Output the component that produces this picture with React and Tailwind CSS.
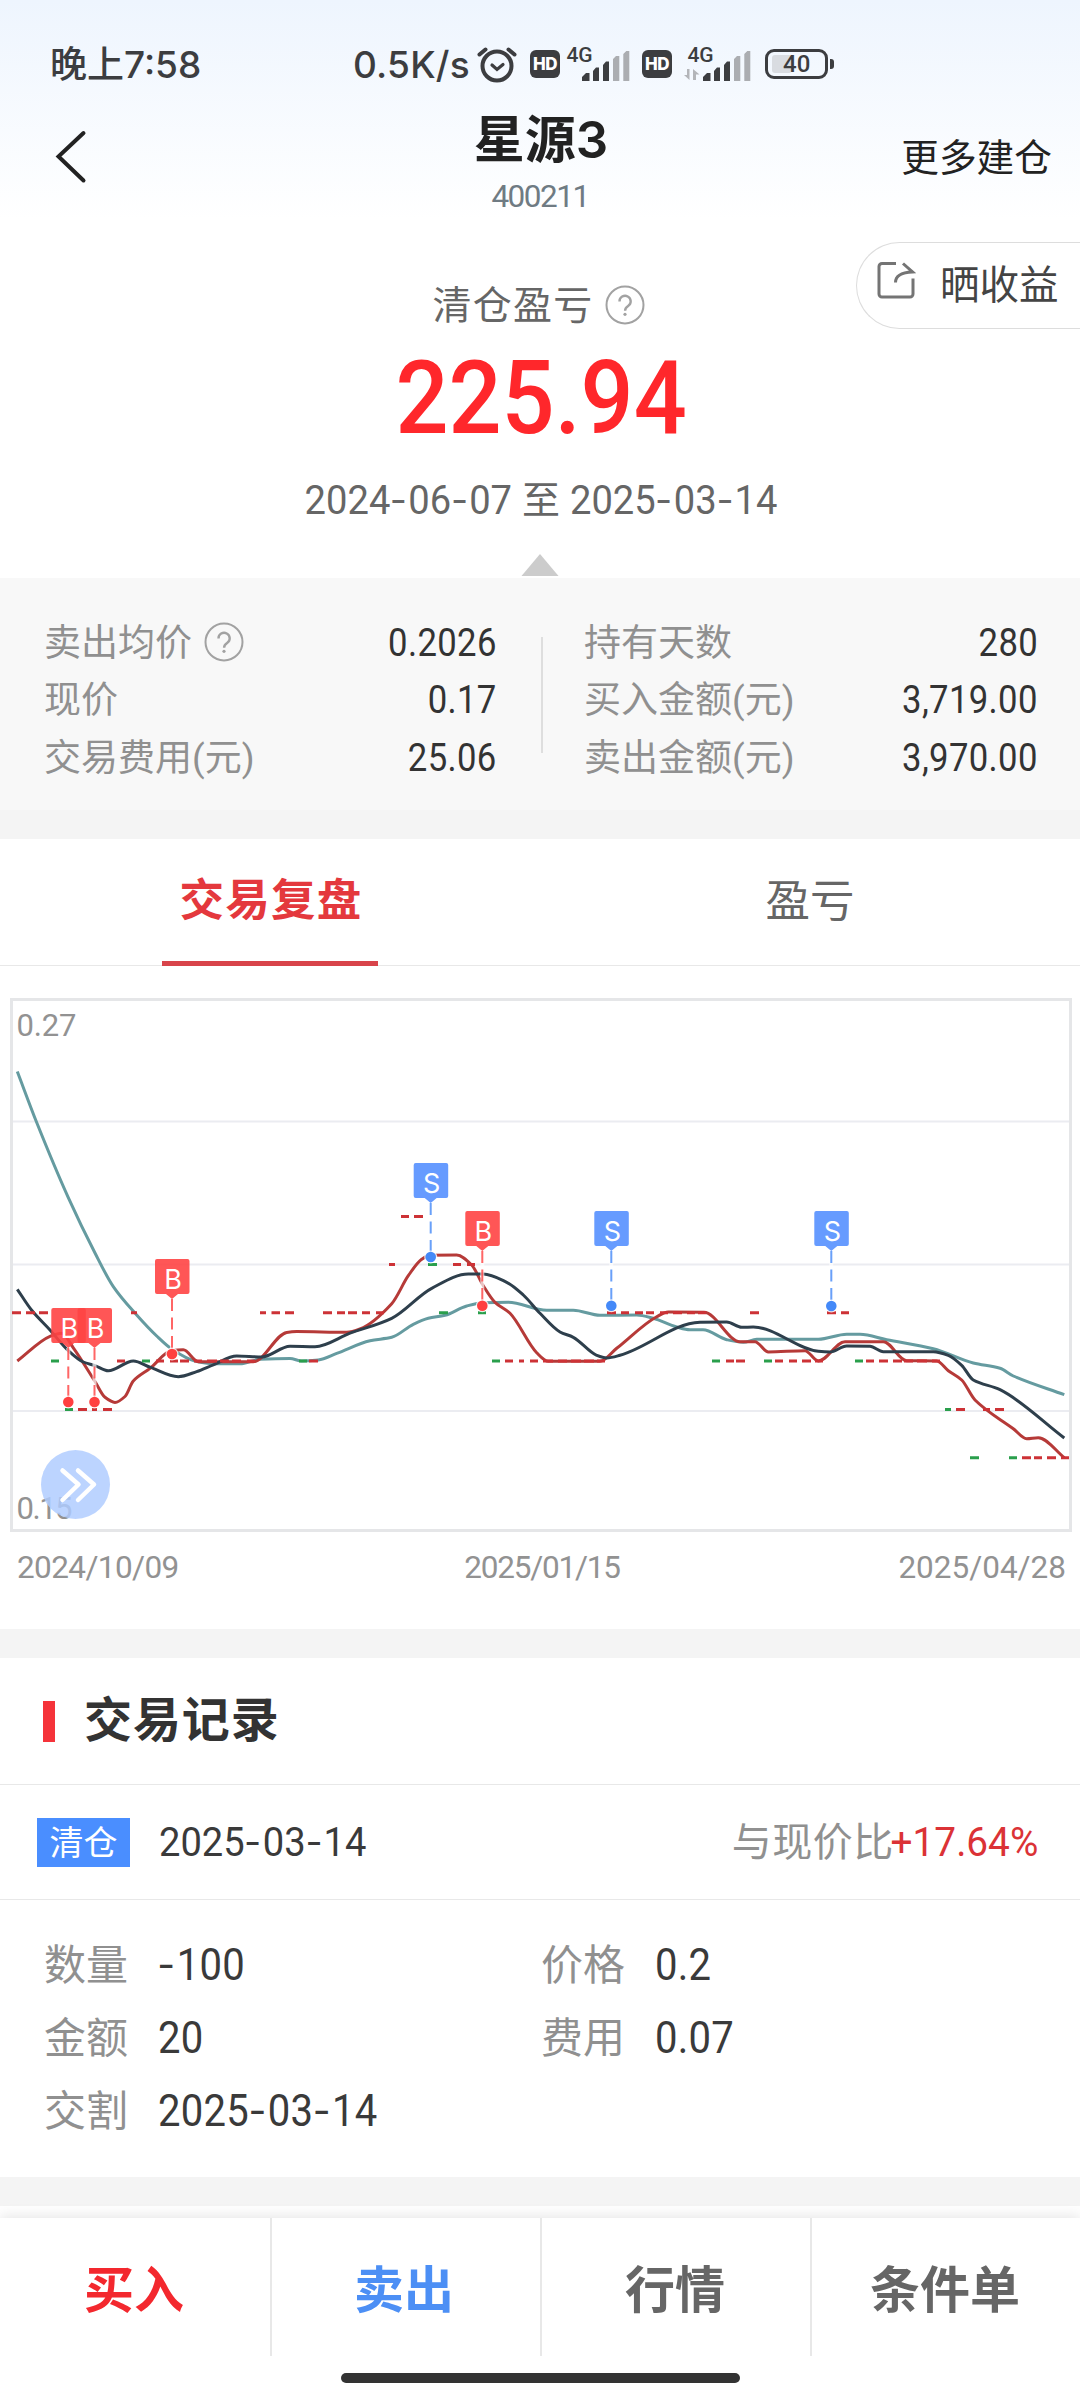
import React from "react";

const MA5 = [[17.3,1361],[50,1336.4],[61.7,1333.2],[73.3,1347.8],[95,1381.5],[105,1397.3],[115,1402.4],[125,1396.5],[133.3,1381],[150,1368.4],[171.7,1350.6],[183.3,1349.8],[198.3,1361.7],[253.3,1361.7],[286.7,1332.4],[296.7,1331.6],[346.7,1332.3],[360,1329],[391.7,1303.7],[408.3,1275.7],[421.7,1259.3],[430,1255.3],[456.7,1255],[471.7,1265],[483.3,1285.7],[495,1302.3],[510,1313.3],[536.7,1352.7],[548.3,1361.3],[600,1361.3],[616.7,1348.3],[656.7,1316.7],[668.3,1312],[704,1312.3],[740,1341.7],[755,1341.7],[768.3,1352],[805,1350.7],[818.3,1361],[845,1341.7],[883.3,1341.7],[906.7,1360.7],[936.7,1361],[948.3,1370.7],[961.7,1380],[975,1400],[1013.3,1428.7],[1026.7,1438.7],[1038.3,1437.7],[1064.3,1457.7]];
const MA10 = [[17.3,1289.3],[31.7,1310.3],[50,1330],[68.3,1350.6],[83.3,1362],[95,1365.6],[108.3,1370.8],[133.3,1361],[150,1367.2],[178.3,1376.7],[196.7,1371.6],[213.3,1364.8],[236.7,1356],[261.7,1357],[290,1346.3],[315,1346.7],[350,1333.2],[391.7,1318.3],[431.7,1288.3],[468.3,1274],[483.3,1274],[506.7,1282.3],[523.3,1295],[540,1313.3],[560,1332],[573.3,1337.3],[596.7,1355.3],[606.7,1358],[620,1355.3],[700,1322.3],[726.7,1322],[741.7,1327.3],[753.3,1327],[818.3,1351.3],[830,1352],[846.7,1346],[870,1346.3],[883.3,1351.7],[933.3,1351.7],[948.3,1355.3],[961.7,1365.3],[973.3,1380],[1000,1389.7],[1064.3,1438]];
const MA20 = [[17.3,1071.5],[36.7,1122.5],[68.3,1197.6],[95,1253],[113.3,1286.6],[136.7,1315],[156.7,1336],[171.7,1349],[195,1361],[213,1363.7],[240,1363.7],[260,1359.3],[290,1358.5],[301.7,1361],[318.3,1360],[336.7,1353.4],[370,1340.7],[391.7,1337.3],[413.3,1324.3],[428.3,1318.3],[445,1315.3],[466.7,1306],[483.3,1302.7],[508.3,1302.3],[546.7,1310.3],[573.3,1310.3],[600,1315.3],[636.7,1315],[653.3,1318.3],[676.7,1327],[690,1329.7],[703,1329.7],[726.7,1339.7],[743.3,1342.3],[756.7,1339.3],[818.3,1339.3],[846.7,1334.3],[860,1334.3],[886.7,1339.7],[933.3,1348.7],[973.3,1363],[1000,1368.3],[1013.3,1376],[1064.3,1394.7]];

// Price ticks: [level, up segments, down segments]
const TICKS = [
  [1216.5, [[401,409],[414,423]], []],
  [1264.5, [[389,395],[453,461],[467,475]], [[428,437]]],
  [1312.7, [[12,21],[26,35],[39,48],[131,137],[260,266],[271.5,280],[285,294],[323,332],[337,345],[348,357],[362,370],[376,384],[607,616],[621,629],[635,643],[646,654],[660,668],[673,682],[687,695],[698,706],[750,759],[827,836],[841,849]], [[439,448],[478,486]]],
  [1361, [[117,125],[156,164],[170,178],[180,189],[194,202],[207,217],[220,229],[232,241],[247,255],[309,318],[505,513],[519,524],[530,538],[543,553],[558,567],[571,581],[584,594],[597,605],[726,734],[736,745],[775,783],[789,797],[802,811],[815,823],[866,874],[879,888],[893,902],[904,913],[917,927],[932,940]], [[51,59],[142,150],[299,307],[492,500],[712,720],[764,772],[855,863]]],
  [1409.5, [[78,87],[92,97],[103,112],[956,965],[983,990],[995,1004]], [[65,73],[945,951]]],
  [1457.7, [[1022,1031],[1034,1042],[1047,1056],[1061,1069]], [[970,979],[1009,1017]]],
];

const MARKERS = [
  ["B", 94.5, 1308, 1402],
  ["B", 68.3, 1308, 1402],
  ["B", 172, 1259, 1354],
  ["S", 430.7, 1163, 1257],
  ["B", 482.3, 1211, 1305.7],
  ["S", 611.3, 1211, 1305.7],
  ["S", 831.3, 1211, 1306],
];

// Monotone cubic path through the points
function smooth(p) {
  const n = p.length;
  const s = [];
  for (let i = 0; i < n - 1; i++) s.push((p[i + 1][1] - p[i][1]) / (p[i + 1][0] - p[i][0]));
  const m = p.map((_, i) => {
    if (i === 0) return s[0];
    if (i === n - 1) return s[n - 2];
    if (s[i - 1] * s[i] <= 0) return 0;
    return (2 * s[i - 1] * s[i]) / (s[i - 1] + s[i]);
  });
  let d = `M${p[0][0]} ${p[0][1]}`;
  for (let i = 0; i < n - 1; i++) {
    const h = (p[i + 1][0] - p[i][0]) / 3;
    d += `C${p[i][0] + h} ${p[i][1] + m[i] * h} ${p[i + 1][0] - h} ${p[i + 1][1] - m[i + 1] * h} ${p[i + 1][0]} ${p[i + 1][1]}`;
  }
  return d;
}

function Marker({ m: [kind, x, top, dot] }) {
  const box = kind === "B" ? "#ff4444" : "#5590ff";
  const fill = kind === "B" ? "#ff4040" : "#4489f8";
  return (
    <g>
      <path d={`M${x} ${top + 40}V${dot}`} stroke="#fff" strokeWidth="4" opacity="0.7" />
      <path d={`M${x} ${top + 40}V${dot}`} stroke={fill} strokeWidth="2" strokeDasharray="12 6.5" opacity="0.8" />
      <circle cx={x} cy={dot} r="6.5" fill="#fff" opacity="0.8" />
      <circle cx={x} cy={dot} r="5.3" fill={fill} />
      <path
        d={`M${x - 15} ${top}h30.500a2 2 0 0 1 2 2v31a2 2 0 0 1-2 2h-9.500l-6 5-6-5h-9a2 2 0 0 1-2-2v-31a2 2 0 0 1 2-2z`}
        fill={box}
        opacity="0.9"
      />
      <text x={x + 1} y={top + 30} textAnchor="middle" fontSize="27" fill="#fff" className="font-[Inter,sans-serif]">{kind}</text>
    </g>
  );
}

function Chart() {
  return (
    <svg width="1062" height="534" viewBox="10 998 1062 534" className="block">
      <g stroke="#ebecf1" strokeWidth="2">
        <path d="M12 1121.500H1070M12 1264.500H1070M12 1411H1070" />
      </g>
      <rect x="11.500" y="999.500" width="1059" height="531" fill="none" stroke="#e5e6e8" strokeWidth="3" />
      <g fontSize="31" fill="#929292" className="font-[Roboto,sans-serif]">
        <text x="16.500" y="1036" textLength="60">0.27</text>
        <text x="16.500" y="1518.500" textLength="56">0.15</text>
      </g>
      <path d={smooth(MA20)} fill="none" stroke="#659ba0" strokeWidth="3" />
      <path d={smooth(MA5)} fill="none" stroke="#b63a38" strokeWidth="3" />
      <path d={smooth(MA10)} fill="none" stroke="#2e3f4c" strokeWidth="3" />
      {TICKS.map(([y, up, down]) => (
        <g key={y} strokeWidth="3">
          <path d={up.map(([a, b]) => `M${a} ${y}H${b}`).join("")} stroke="#cd3236" />
          <path d={down.map(([a, b]) => `M${a} ${y}H${b}`).join("")} stroke="#2a9f4c" />
        </g>
      ))}
      {MARKERS.map((m) => <Marker key={m[1]} m={m} />)}
      <circle cx="75.500" cy="1484.500" r="34.500" fill="#aecbff" opacity="0.83" />
      <path d="M62.500 1470.500l16 14-16 15.500M78 1470.500l16 14-16 15.500" fill="none" stroke="#fff" strokeWidth="4.500" strokeLinecap="round" strokeLinejoin="round" />
    </svg>
  );
}

function Help() {
  return (
    <svg width="40" height="40" viewBox="0 0 40 40" fill="none" stroke="#a2a2a2" className="block">
      <circle cx="20" cy="20" r="18.500" strokeWidth="2" />
      <path d="M14.500 16.500a5.600 5.600 0 1 1 8.600 4.600c-2 1.300-3 2.300-3 4.700" strokeWidth="2.400" />
      <circle cx="20" cy="29.300" r="1.600" fill="#a2a2a2" stroke="none" />
    </svg>
  );
}

function Hd() {
  return (
    <div className="flex h-[28px] w-[30px] items-center justify-center rounded-[6px] bg-[#3c3d40] font-[Inter,sans-serif] text-[17px] font-extrabold leading-none tracking-[-0.500px] text-white">HD</div>
  );
}

function Signal({ data }) {
  return (
    <svg width="68" height="52" viewBox="0 -8 68 52" className="block overflow-visible">
      <text x="3.500" y="15.500" fontSize="21" textLength="26" fill="#3c3d40" className="font-[Roboto,sans-serif]">4G</text>
      <path d="M19 35v-4l4-4h3.500v8zM30 35v-10l3-3.500h3v13.500zM40 35v-16l3-3.500h3v19.500z" fill="#3c3d40" />
      <path d="M50 13l3-3h3.300v25h-6.300zM60.300 8l3-3h3v30h-6z" fill="#abadb1" />
      {data && <path d="M5.500 23v11l-5.500-5h3v-6zM9 34v-11l6.500 5.500h-3.500v5.500z" fill="#b3b5b9" />}
    </svg>
  );
}

// Digits are condensed; hyphens get extra room on both sides
function Digits({ children }) {
  return children.split("-").map((part, i) => (
    <React.Fragment key={i}>
      {i > 0 && <span className="mr-[5px] ml-[3px] inline-block scale-x-[1.3]">-</span>}
      {part}
    </React.Fragment>
  ));
}

function StatusBar() {
  return (
    <div className="flex h-[128px] items-center text-[37px] font-medium leading-none text-[#3c3d40]">
      <span className="ml-[50px] w-[303px] font-[Inter,'Noto_Sans_CJK_SC',sans-serif] whitespace-nowrap">晚上7:58</span>
      <span className="w-[123px] font-[Inter,sans-serif] tracking-[0.2px] whitespace-nowrap">0.5K/s</span>
      <svg width="42" height="38" viewBox="0 0 42 38" fill="none" stroke="#3c3d40" strokeWidth="4" strokeLinecap="round" className="block">
        <circle cx="21" cy="21" r="14.500" />
        <path d="M3.500 9.500l6-5M38.500 9.500l-6-5" />
        <path d="M16 20l5 4.500 6-5" strokeWidth="3.200" />
      </svg>
      <div className="ml-[12px]"><Hd /></div>
      <div className="ml-[3px]"><Signal /></div>
      <div className="ml-[11px]"><Hd /></div>
      <div className="ml-[12px]"><Signal data /></div>
      <div className="ml-[13px] flex items-center gap-[2px]">
        <div className="flex h-[30px] w-[63px] items-center rounded-[9px] border-[3px] border-[#3c3d40] pl-[4px]">
          <div className="h-[18px] w-[20px] rounded-[3px] bg-[#d9dce1]" />
          <span className="-ml-[9px] font-[Roboto,sans-serif] text-[24px] leading-none">40</span>
        </div>
        <div className="h-[10px] w-[4px] rounded-r-[3px] bg-[#3c3d40]" />
      </div>
    </div>
  );
}

function Stat({ label, value, help }) {
  return (
    <div className="flex h-[57.500px] items-center justify-between text-[37px] leading-none">
      <div className="flex items-center gap-[12px] text-[#909090]">
        <span className="pt-[3px]">{label}</span>
        {help && <Help />}
      </div>
      <span className="origin-right scale-x-[0.9] pt-[2px] text-[38.500px] tracking-[0.4px] text-[#333]">{value}</span>
    </div>
  );
}

function Field({ label, value }) {
  return (
    <div className="flex h-[73px] items-center text-[42px] leading-none">
      <span className="w-[114px] pt-[3px] text-[#909090]">{label}</span>
      <span className="origin-left scale-x-[0.92] pt-[2px] text-[43.500px] tracking-[0.3px] text-[#3a3a3a]"><Digits>{value}</Digits></span>
    </div>
  );
}

const ACTIONS = [
  ["买入", "text-[#f3282e] pr-[2px]"],
  ["卖出", "text-[#4c8ff5] border-l-2 pr-[4px]"],
  ["行情", "text-[#666] border-l-2 pr-[2px]"],
  ["条件单", "text-[#666] border-l-2 pr-[2px]"],
];

export default function App() {
  return (
    <div className="flex h-[2400px] w-[1080px] flex-col overflow-hidden bg-white font-[Roboto,'Noto_Sans_CJK_SC',sans-serif]">
      <header className="h-[220px] shrink-0 bg-linear-to-b from-[#eef5fe] to-white">
        <div className="h-[96px]"><StatusBar /></div>
        <div className="flex h-[124px] justify-between">
          <svg width="300" height="100" viewBox="0 0 300 100" className="block" fill="none" stroke="#222" strokeWidth="4" strokeLinecap="round">
            <path d="M83.500 37L58.500 60.500L83.500 84.500" />
          </svg>
          <div className="flex w-[300px] flex-col items-center pt-[18px] pl-[2px] leading-none">
            <h1 className="font-[Inter,'Noto_Sans_CJK_SC',sans-serif] text-[51px] font-semibold leading-none text-[#222]">星源3</h1>
            <p className="mt-[16px] pr-[2px] text-[31.500px] leading-none tracking-[-1.500px] text-[#6f7b83]">400211</p>
          </div>
          <span className="w-[300px] pt-[44px] pr-[28px] text-right text-[37.700px] leading-none text-[#222]">更多建仓</span>
        </div>
      </header>

      <section className="flex h-[358px] shrink-0 flex-col">
        <div className="flex h-[108px] justify-end pt-[22px]">
          <div className="flex h-[87px] w-[224px] shrink-0 items-center rounded-l-full border border-r-0 border-[#ddd] pl-[19px] text-[39.500px] leading-none text-[#444]">
            <svg width="40" height="40" viewBox="0 0 40 40" fill="none" stroke="#747474" strokeWidth="3" className="mr-[24px] block -translate-y-[6px]">
              <path d="M20 3.500H6a3 3 0 0 0-3 3V34a3 3 0 0 0 3 3h28a3 3 0 0 0 3-3V18.500" />
              <path d="M19.500 22.500c0-7 6-10 17-10.500L27 3.500" />
            </svg>
            <span className="pt-[1px] whitespace-nowrap">晒收益</span>
          </div>
        </div>
        <div className="-mt-[48px] flex h-[50px] items-center justify-center gap-[11px] pr-[3px] text-[39px] leading-none tracking-[1.300px] text-[#666]">
          <span className="pt-[2px]">清仓盈亏</span>
          <Help />
        </div>
        <div className="mt-[16px] flex h-[103px] items-center justify-center pl-[2px]">
          <span className="scale-x-[0.915] text-[102px] font-medium leading-none text-[#ff272b]">225.94</span>
        </div>
        <div className="mt-[31px] flex h-[40px] items-center justify-center gap-[10px] pl-[2px] text-[#666]">
          <span className="origin-right scale-x-[0.93] text-[41px] leading-none"><Digits>2024-06-07</Digits></span>
          <span className="text-[38px] leading-none">至</span>
          <span className="origin-left scale-x-[0.93] text-[41px] leading-none"><Digits>2025-03-14</Digits></span>
        </div>
        <svg width="38" height="22" viewBox="0 0 38 22" className="mx-auto mt-[34px] block"><path d="M19 0L37.500 22H.5z" fill="#ccc" /></svg>
      </section>

      <section className="flex h-[232px] shrink-0 bg-[#f8f8f8] pt-[35px]">
        <div className="w-[541px] pr-[44px] pl-[44px]">
          <Stat label="卖出均价" value="0.2026" help />
          <Stat label="现价" value="0.17" />
          <Stat label="交易费用(元)" value="25.06" />
        </div>
        <div className="mt-[24px] h-[116px] w-[2px] bg-[#dedede]" />
        <div className="w-[537px] pr-[42px] pl-[41px]">
          <Stat label="持有天数" value="280" />
          <Stat label="买入金额(元)" value="3,719.00" />
          <Stat label="卖出金额(元)" value="3,970.00" />
        </div>
      </section>
      <div className="h-[29px] shrink-0 bg-[#f4f4f4]" />

      <nav className="grid h-[127px] shrink-0 grid-cols-2 border-b border-[#e8e8e8] text-[44.500px] leading-none">
        <div className="flex justify-center">
          <div className="flex h-[127px] w-[216px] items-center justify-center border-b-[5px] border-[#d8444a] pt-[3px] pl-[2px] font-bold tracking-[1.200px] whitespace-nowrap text-[#e4383d]">交易复盘</div>
        </div>
        <div className="flex items-center justify-center text-[#666]">盈亏</div>
      </nav>

      <section className="h-[663px] shrink-0 pt-[32px] pl-[10px]">
        <Chart />
        <div className="mt-[20px] flex w-[1056px] items-center justify-between pl-[7px] text-[31.500px] leading-none text-[#929292]">
          <span className="tracking-[-0.600px]">2024/10/09</span>
          <span className="pl-[7px] tracking-[-1.200px]">2025/01/15</span>
          <span>2025/04/28</span>
        </div>
      </section>
      <div className="h-[29px] shrink-0 bg-[#f4f4f4]" />

      <section className="h-[519px] shrink-0">
        <div className="flex h-[127px] items-center border-b border-[#e8e8e8] pl-[43px]">
          <div className="h-[41px] w-[12px] bg-[#f5333a]" />
          <h2 className="ml-[29px] text-[48px] font-bold leading-none tracking-[0.900px] text-[#333]">交易记录</h2>
        </div>
        <div className="flex h-[115px] items-center border-b border-[#e8e8e8] pr-[42px] pl-[37px] leading-none">
          <span className="flex h-[49px] w-[93px] items-center justify-center bg-[#4a8eff] pt-[1px] text-[34px] text-white">清仓</span>
          <span className="ml-[29px] origin-left scale-x-[0.93] pt-[1px] text-[41px] text-[#3a3a3a]"><Digits>2025-03-14</Digits></span>
          <div className="ml-auto flex items-center">
            <span className="pt-[2px] text-[40px] tracking-[0.500px] text-[#909090]">与现价比</span>
            <span className="-ml-[12px] origin-right scale-x-[0.945] text-[41px] text-[#db3236]">+17.64%</span>
          </div>
        </div>
        <div className="grid grid-cols-[497px_1fr] pt-[28px] pl-[44px]">
          <Field label="数量" value="-100" />
          <Field label="价格" value="0.2" />
          <Field label="金额" value="20" />
          <Field label="费用" value="0.07" />
          <Field label="交割" value="2025-03-14" />
        </div>
      </section>
      <div className="h-[29px] shrink-0 bg-[#f4f4f4]" />

      <footer className="mt-[12px] h-[182px] shrink-0 bg-white shadow-[0_-3px_12px_rgba(0,0,0,0.09)]">
        <div className="grid h-[138px] grid-cols-4">
          {ACTIONS.map(([label, color]) => (
            <div key={label} className={`flex items-center justify-center border-[#e8e8e8] pt-[8px] text-[50px] font-bold leading-none ${color}`}>{label}</div>
          ))}
        </div>
        <div className="mx-auto mt-[17px] h-[10px] w-[399px] rounded-full bg-[#333]" />
      </footer>
    </div>
  );
}
